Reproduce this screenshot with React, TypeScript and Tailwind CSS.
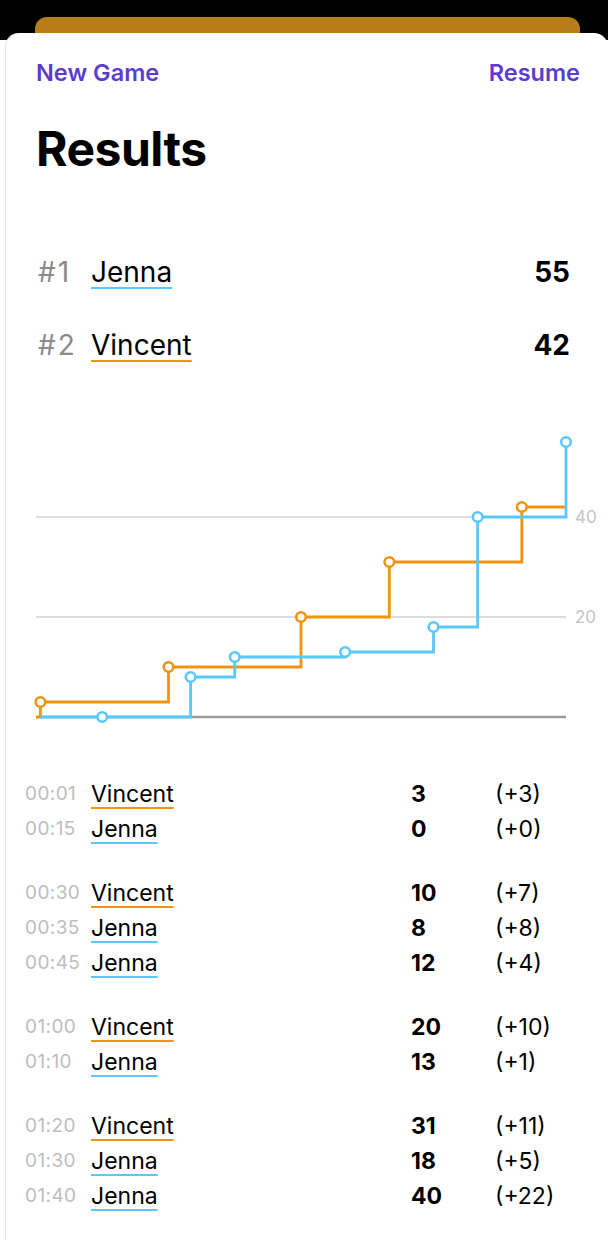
import React from "react";

const BLUE = "#5ac8fa";
const ORANGE = "#f0930f";

type Player = "Jenna" | "Vincent";

const turns: { time: string; player: Player; score: number; delta: number }[][] = [
  [
    { time: "00:01", player: "Vincent", score: 3, delta: 3 },
    { time: "00:15", player: "Jenna", score: 0, delta: 0 },
  ],
  [
    { time: "00:30", player: "Vincent", score: 10, delta: 7 },
    { time: "00:35", player: "Jenna", score: 8, delta: 8 },
    { time: "00:45", player: "Jenna", score: 12, delta: 4 },
  ],
  [
    { time: "01:00", player: "Vincent", score: 20, delta: 10 },
    { time: "01:10", player: "Jenna", score: 13, delta: 1 },
  ],
  [
    { time: "01:20", player: "Vincent", score: 31, delta: 11 },
    { time: "01:30", player: "Jenna", score: 18, delta: 5 },
    { time: "01:40", player: "Jenna", score: 40, delta: 22 },
  ],
];

const vincentPts: [number, number][] = [
  [1, 3],
  [30, 10],
  [60, 20],
  [80, 31],
  [110, 42],
];
const jennaPts: [number, number][] = [
  [15, 0],
  [35, 8],
  [45, 12],
  [70, 13],
  [90, 18],
  [100, 40],
  [120, 55],
];

const X = (t: number) => 35 + (t * 530) / 120;
const Y = (v: number) => 717 - v * 5;

function stepPath(start: number, pts: [number, number][], end: number) {
  let d = `M ${X(start)} ${Y(0)}`;
  for (const [t, v] of pts) d += ` H ${X(t)} V ${Y(v)}`;
  d += ` H ${X(end)}`;
  return d;
}

function Name({ player, className }: { player: Player; className: string }) {
  return (
    <span
      className={`${className} underline decoration-2 underline-offset-[5px] ${
        player === "Jenna" ? "decoration-[#5ac8fa]" : "decoration-[#f0930f]"
      }`}
    >
      {player}
    </span>
  );
}

function Chart() {
  return (
    <svg width={603} height={340} viewBox="5 400 603 340" className="block">
      <line x1={35} x2={565} y1={Y(40)} y2={Y(40)} stroke="#d2d2d2" strokeWidth={1.5} />
      <line x1={35} x2={565} y1={Y(20)} y2={Y(20)} stroke="#d2d2d2" strokeWidth={1.5} />
      <text x={574} y={Y(40) + 6} fontSize={17} fill="#c4c4c4" fontFamily="Inter, sans-serif">
        40
      </text>
      <text x={574} y={Y(20) + 6} fontSize={17} fill="#c4c4c4" fontFamily="Inter, sans-serif">
        20
      </text>
      <line x1={35} x2={565} y1={Y(0)} y2={Y(0)} stroke="#9a9a9a" strokeWidth={2.5} />
      <path d={stepPath(0, vincentPts, 120)} fill="none" stroke={ORANGE} strokeWidth={2.8} />
      <path d={stepPath(1, jennaPts, 120)} fill="none" stroke={BLUE} strokeWidth={2.8} />
      {vincentPts.map(([t, v]) => (
        <circle key={`v${t}`} cx={X(t)} cy={Y(v)} r={4.8} fill="white" stroke={ORANGE} strokeWidth={2.6} />
      ))}
      {jennaPts.map(([t, v]) => (
        <circle key={`j${t}`} cx={X(t)} cy={Y(v)} r={4.8} fill="white" stroke={BLUE} strokeWidth={2.6} />
      ))}
    </svg>
  );
}

export default function App() {
  return (
    <div className="flex h-[1240px] flex-col overflow-hidden bg-white font-['Inter',sans-serif]">
      <div className="h-[40px] shrink-0 bg-black pt-[17px]">
        <div className="ml-[35px] mr-[28px] h-[23px] rounded-t-[12px] bg-[#b87d17]" />
      </div>
      <div className="-mt-[7px] ml-[5px] flex flex-1 flex-col rounded-t-[14px] border-l border-[#e2e2e2] bg-white">
        <div className="flex justify-between pl-[30px] pr-[28px] pt-[26px] text-[23.5px] font-semibold leading-[28px] text-[#5b3ccf]">
          <span>New Game</span>
          <span>Resume</span>
        </div>
        <h1 className="mt-[34px] pl-[30px] text-[48px] font-bold leading-[56px] tracking-[-0.5px] text-black">
          Results
        </h1>

        <div className="mt-[73px] flex flex-col gap-[29px] pl-[32px] pr-[38px]">
          {[
            { rank: 1, player: "Jenna" as Player, score: 55 },
            { rank: 2, player: "Vincent" as Player, score: 42 },
          ].map((s) => (
            <div key={s.rank} className="flex h-[44px] items-center text-[28px]">
              <span className="w-[53px] tracking-[2px] text-[#8a8a8a]">#{s.rank}</span>
              <Name player={s.player} className="text-black" />
              <span className="ml-auto font-bold text-black">{s.score}</span>
            </div>
          ))}
        </div>

        <div className="mt-[33px]">
          <Chart />
        </div>

        <div className="mt-[37px] flex flex-col gap-[29px] pl-[19px]">
          {turns.map((group, gi) => (
            <div key={gi} className="flex flex-col">
              {group.map((r) => (
                <div key={r.time} className="flex h-[35px] items-center">
                  <span className="w-[66px] text-[19px] tracking-[0.4px] text-[#bdbdbd]">{r.time}</span>
                  <span className="w-[320px]">
                    <Name player={r.player} className="text-[23px] text-black" />
                  </span>
                  <span className="w-[84px] text-[23px] font-bold text-black">{r.score}</span>
                  <span className="text-[23px] text-black">(+{r.delta})</span>
                </div>
              ))}
            </div>
          ))}
        </div>
      </div>
    </div>
  );
}
